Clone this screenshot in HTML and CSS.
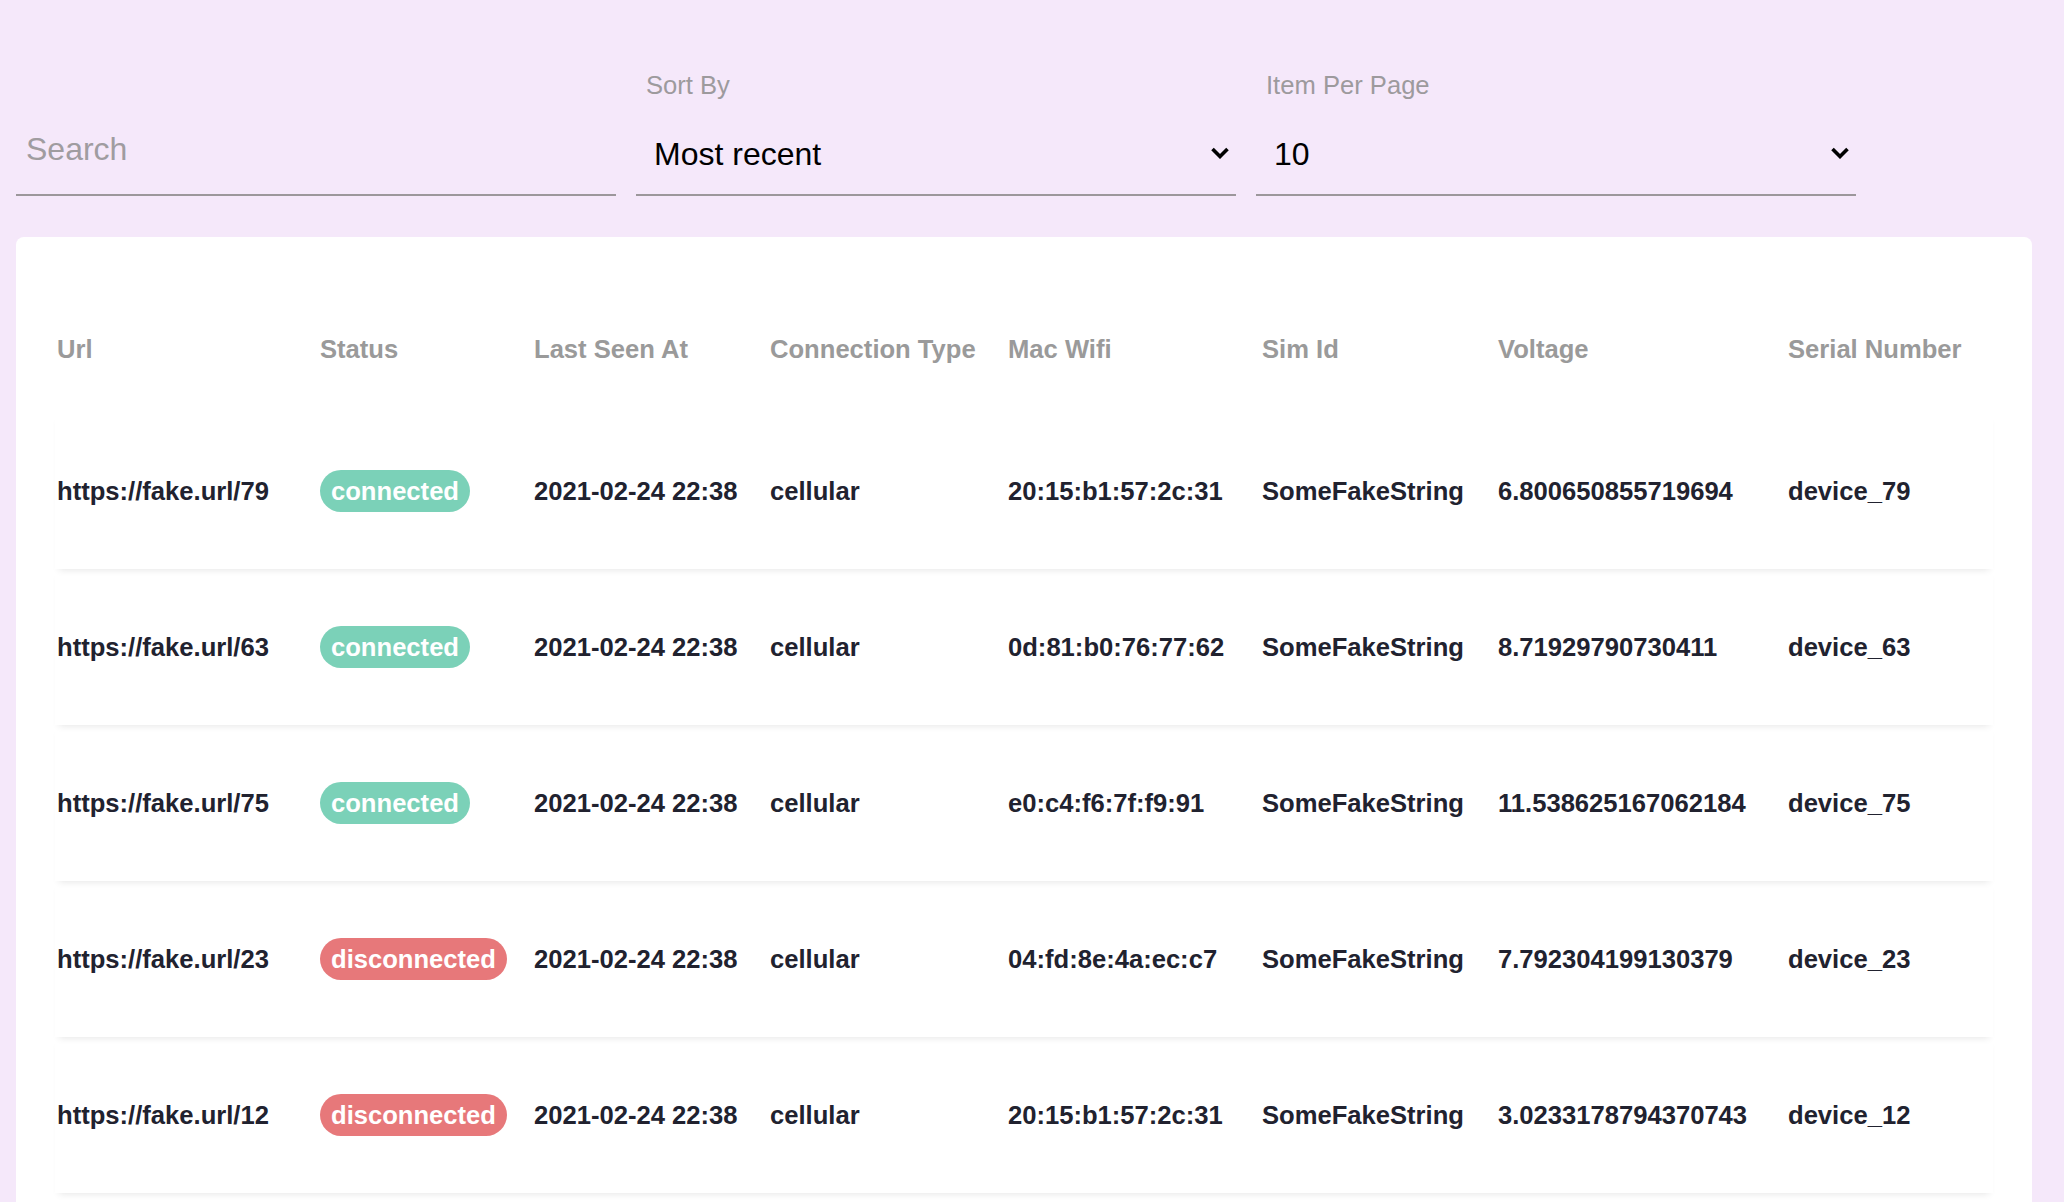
FILE: index.html
```html
<!DOCTYPE html>
<html lang="en">
<head>
<meta charset="utf-8">
<title>Devices</title>
<link rel="stylesheet" href="styles.css">
</head>
<body>
<div class="page">
  <div class="filters">
    <div class="field">
      <div class="label"></div>
      <div class="control search">Search</div>
    </div>
    <div class="field">
      <div class="label">Sort By</div>
      <div class="control select">
        <span>Most recent</span>
        <svg class="chev" width="20" height="12" viewBox="0 0 20 12"><polyline points="2.5,2 10,9.5 17.5,2" fill="none" stroke="#000" stroke-width="3.6"/></svg>
      </div>
    </div>
    <div class="field">
      <div class="label">Item Per Page</div>
      <div class="control select">
        <span>10</span>
        <svg class="chev" width="20" height="12" viewBox="0 0 20 12"><polyline points="2.5,2 10,9.5 17.5,2" fill="none" stroke="#000" stroke-width="3.6"/></svg>
      </div>
    </div>
  </div>

  <div class="card">
    <div class="row head">
      <div>Url</div><div>Status</div><div>Last Seen At</div><div>Connection Type</div><div>Mac Wifi</div><div>Sim Id</div><div>Voltage</div><div>Serial Number</div>
    </div>
    <div class="row item">
      <div>https://fake.url/79</div><div><span class="badge ok">connected</span></div><div>2021-02-24 22:38</div><div>cellular</div><div>20:15:b1:57:2c:31</div><div>SomeFakeString</div><div>6.800650855719694</div><div>device_79</div>
    </div>
    <div class="row item">
      <div>https://fake.url/63</div><div><span class="badge ok">connected</span></div><div>2021-02-24 22:38</div><div>cellular</div><div>0d:81:b0:76:77:62</div><div>SomeFakeString</div><div>8.71929790730411</div><div>device_63</div>
    </div>
    <div class="row item">
      <div>https://fake.url/75</div><div><span class="badge ok">connected</span></div><div>2021-02-24 22:38</div><div>cellular</div><div>e0:c4:f6:7f:f9:91</div><div>SomeFakeString</div><div>11.538625167062184</div><div>device_75</div>
    </div>
    <div class="row item">
      <div>https://fake.url/23</div><div><span class="badge bad">disconnected</span></div><div>2021-02-24 22:38</div><div>cellular</div><div>04:fd:8e:4a:ec:c7</div><div>SomeFakeString</div><div>7.792304199130379</div><div>device_23</div>
    </div>
    <div class="row item">
      <div>https://fake.url/12</div><div><span class="badge bad">disconnected</span></div><div>2021-02-24 22:38</div><div>cellular</div><div>20:15:b1:57:2c:31</div><div>SomeFakeString</div><div>3.0233178794370743</div><div>device_12</div>
    </div>
  </div>
</div>
</body>
</html>
```

FILE: styles.css
```css
html, body {
  margin: 0;
  padding: 0;
  background: #f5e8fa;
  font-family: "Liberation Sans", Arial, Helvetica, sans-serif;
}

.page {
  padding: 70px 32px 0 16px;
}

.filters {
  display: flex;
  gap: 20px;
}

.field {
  width: 600px;
  display: flex;
  flex-direction: column;
}

.label {
  height: 30px;
  line-height: 30px;
  padding-left: 10px;
  font-size: 25.6px;
  color: #9d9a9d;
}

.control {
  margin-top: 10px;
  box-sizing: border-box;
  border-bottom: 2px solid #9c979b;
  font-size: 32px;
  line-height: 40px;
}

.control.search {
  height: 86px;
  padding: 19px 0 0 10px;
  color: #a09ca0;
}

.control.select {
  height: 86px;
  padding: 0 6px 0 18px;
  display: flex;
  align-items: center;
  justify-content: space-between;
  color: #000;
}

.control.select span {
  padding-top: 4px;
}

.chev {
  display: block;
  margin-top: 2px;
}

.card {
  margin-top: 41px;
  background: #ffffff;
  border-radius: 8px;
  padding: 48px 39px 40px 39px;
}

.row {
  display: grid;
  grid-template-columns: 263px 214px 236px 238px 254px 236px 290px 1fr;
  align-items: center;
  padding-left: 2px;
  font-size: 25.6px;
  font-weight: 700;
  white-space: nowrap;
}

.row.head {
  height: 128px;
  color: #9a9a9a;
}

.row.item {
  height: 156px;
  color: #21222f;
  box-shadow: 0 5px 7px -4px rgba(0, 0, 0, 0.1);
}

.badge {
  display: inline-block;
  height: 42px;
  line-height: 43px;
  padding: 0 11px;
  border-radius: 21px;
  color: #ffffff;
  font-weight: 700;
}

.badge.ok {
  background: #7bd1b8;
}

.badge.bad {
  background: #e7787a;
}
```
